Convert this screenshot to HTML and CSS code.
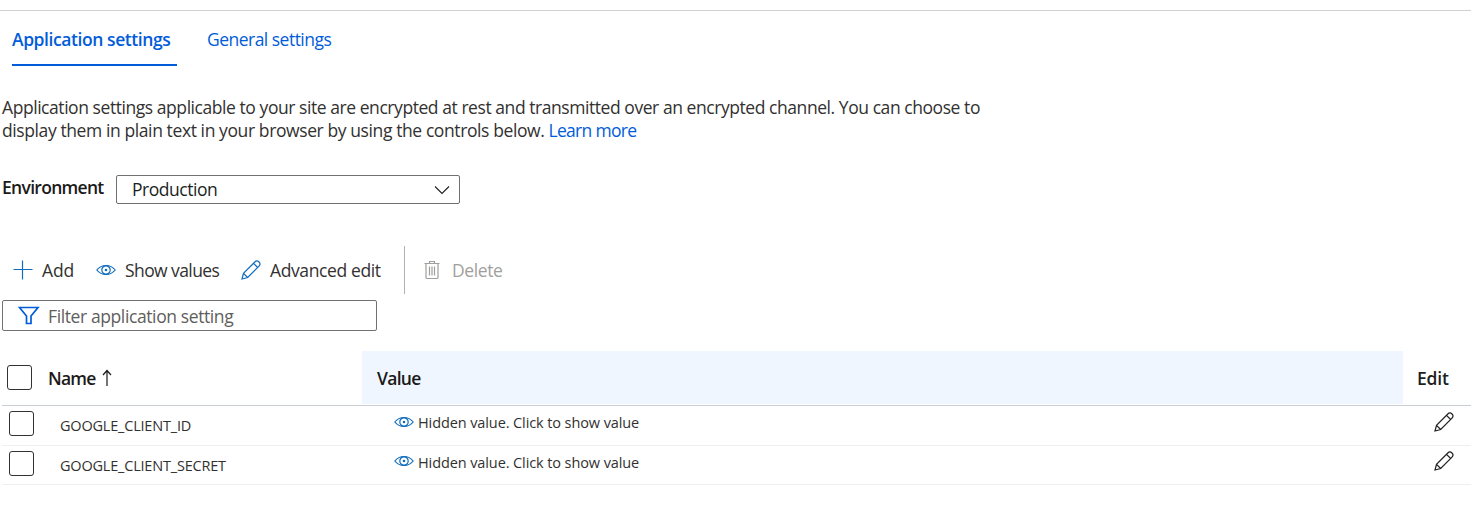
FILE: index.html
```html
<!DOCTYPE html>
<html lang="en">
<head>
<meta charset="utf-8">
<title>Application settings</title>
<link rel="stylesheet" href="styles.css">
</head>
<body>
<svg class="sprite" width="0" height="0" aria-hidden="true">
  <symbol id="eye" viewBox="0 0 20 12"><path d="M.8 6C3 3.200 6.200 1.500 10 1.500s7 1.700 9.200 4.500C17 8.800 13.800 10.500 10 10.500S3 8.800.8 6Z"/><circle cx="10" cy="6" r="4.200"/><circle cx="10" cy="6" r=".7" class="dot"/></symbol>
  <symbol id="pencil" viewBox="0 0 20 20"><path d="M1 19l1.500-5.700L13.800 2a2.970 2.970 0 0 1 4.200 4.200L6.700 17.500 1 19ZM12.500 3.300l4.200 4.200M2.500 13.300l4.200 4.200"/></symbol>
</svg>
<main class="page">
  <nav class="tabs">
    <a class="tab active"><span class="t-app">Application settings</span></a>
    <a class="tab"><span class="t-gen">General settings</span></a>
  </nav>
  <p class="intro"><span class="line1">Application settings applicable to your site are encrypted at rest and transmitted over an encrypted channel. You can choose to</span><br><span class="line2">display them in plain text in your browser by using the controls below. </span><a class="learn">Learn more</a></p>
  <div class="environment">
    <label class="env-label">Environment</label>
    <div class="select"><span class="prod">Production</span><svg class="chevron" width="16" height="10" viewBox="0 0 16 10"><path d="M1 1.500l7 7 7-7"/></svg></div>
  </div>
  <div class="toolbar">
    <span class="command add"><svg class="icon" width="20" height="20" viewBox="0 0 20 20"><path d="M9.500 .5v19M.5 9.500h19"/></svg><span class="t-add">Add</span></span>
    <span class="command show"><svg class="icon" width="20" height="12"><use href="#eye"/></svg><span class="t-show">Show values</span></span>
    <span class="command advanced"><svg class="icon" width="20" height="20"><use href="#pencil"/></svg><span class="t-adv">Advanced edit</span></span>
    <span class="command delete"><svg class="icon" width="16" height="20" viewBox="0 0 16 20"><path d="M.5 3.500h15M5.500 3.500v-2h5v2M2 3.500v14q0 1 1 1h10q1 0 1-1v-14M5.500 6.500v9M8 6.500v9M10.500 6.500v9"/></svg><span class="t-del">Delete</span></span>
  </div>
  <div class="filter"><svg class="funnel" width="22" height="20" viewBox="0 0 22 20"><path d="M1.500 1.500h18.500l-7 8.500v7.500H8.500V10Z"/></svg><span class="t-filter">Filter application setting</span></div>
  <section class="table">
    <div class="row head">
      <div class="name"><span class="check"></span><span class="t-name">Name</span><svg class="arrow" width="10" height="18" viewBox="0 0 10 18"><path d="M5 17V2M1 6l4-4.500L9 6"/></svg></div>
      <div class="value"><span class="t-value">Value</span></div>
      <div class="edit"><span class="t-edit">Edit</span></div>
    </div>
    <div class="row">
      <div class="name"><span class="check"></span><span class="t-id">GOOGLE_CLIENT_ID</span></div>
      <div class="value"><svg class="icon" width="20" height="12"><use href="#eye"/></svg><span class="t-hidden">Hidden value. Click to show value</span></div>
      <div class="edit"><svg class="pencil" width="20" height="20"><use href="#pencil"/></svg></div>
    </div>
    <div class="row">
      <div class="name"><span class="check"></span><span class="t-secret">GOOGLE_CLIENT_SECRET</span></div>
      <div class="value"><svg class="icon" width="20" height="12"><use href="#eye"/></svg><span class="t-hidden">Hidden value. Click to show value</span></div>
      <div class="edit"><svg class="pencil" width="20" height="20"><use href="#pencil"/></svg></div>
    </div>
  </section>
</main>
</body>
</html>
```
FILE: styles.css
```css
* { box-sizing: border-box; }
body { margin: 0; background: #fff; color: #323130; font: 17.5px/23px "Open Sans", "Noto Sans", sans-serif; white-space: nowrap; }
.sprite { display: block; }
.page { height: 513px; padding-top: 10px; overflow: hidden; }
svg { flex: none; fill: none; stroke: currentColor; stroke-width: 1.200; }
.dot { fill: currentColor; }
.tabs { display: flex; gap: 30px; height: 56px; padding-left: 12px; border-top: 1px solid #d2d0ce; color: #015cda; }
.tab { height: 55px; padding-top: 17px; }
.active { width: 165px; border-bottom: 2px solid #015cda; font-weight: 600; }
.t-app { letter-spacing: -.42px; }
.t-gen { letter-spacing: -.52px; }
.intro { height: 79px; margin: 30px 0 0 2px; }
.line1 { letter-spacing: -.44px; }
.line2 { letter-spacing: -.4px; }
.learn { color: #015cda; letter-spacing: -.7px; }
.environment { display: flex; height: 29px; padding-left: 2px; }
.env-label { width: 114px; padding-top: 1px; color: #1b1a19; font-weight: 600; letter-spacing: -.7px; }
.select { display: flex; align-items: center; justify-content: space-between; width: 344px; padding: 0 9px 0 15px; border: 1px solid #73716f; border-radius: 2px; color: #201f1e; }
.prod { letter-spacing: -.46px; }
.chevron { stroke-width: 1.100; }
.toolbar { display: flex; height: 48px; margin-top: 42px; }
.command { display: flex; align-items: center; }
.command .icon { margin-bottom: 1px; }
.icon { color: #0f6cbd; }
.add { width: 83px; padding-left: 13px; gap: 9px; }
.show { padding-left: 13px; width: 158px; gap: 9px; }
.advanced { width: 163px; gap: 9px; }
.delete { padding-left: 19px; gap: 12px; border-left: 1px solid #b3b0ad; color: #a19f9d; }
.delete .icon { color: #a19f9d; }
.t-add { letter-spacing: -.1px; }
.t-show { letter-spacing: -.58px; }
.t-adv { letter-spacing: -.38px; }
.t-del { letter-spacing: -.4px; }
.filter { display: flex; align-items: center; gap: 8px; width: 375px; height: 31px; margin: 6px 0 0 2px; padding-left: 15px; border: 1px solid #73716f; border-radius: 2px; color: #605e5c; }
.t-filter { padding-top: 2px; letter-spacing: -.39px; }
.funnel { color: #015cda; stroke-width: 1.700; }
.table { margin: 20px 0 0 2px; }
.row { display: grid; grid-template-columns: 360px 1041px 1fr; height: 40px; border-bottom: 1px solid #f0efee; font-size: 14.5px; }
.row:last-child { height: 39px; }
.row > div { display: flex; align-items: center; }
.row.head { height: 55px; padding-bottom: 1px; border-color: #c8cdd6; color: #1b1a19; font-size: 17.500px; font-weight: 600; }
.check { flex: none; width: 25px; height: 25px; border: 1.500px solid #323130; border-radius: 3px; margin: 0 26px 4px 7px; }
.head .check { margin: 0 16px 0 5px; }
.t-name { padding-top: 2px; letter-spacing: -.8px; }
.t-value { letter-spacing: -.7px; }
.t-edit { letter-spacing: -.2px; }
.t-id, .t-secret { letter-spacing: -.2px; }
.t-hidden { letter-spacing: -.1px; }
.arrow { margin-left: 7px; }
.value { padding: 0 0 6px 32px; gap: 4px; }
.value .icon { margin-bottom: 2px; }
.head .value { padding: 2px 0 0 15px; background: #eff6ff; }
.edit { padding: 0 0 8px 31px; color: #201f1e; }
.head .edit { padding: 2px 0 0 14px; }
```
